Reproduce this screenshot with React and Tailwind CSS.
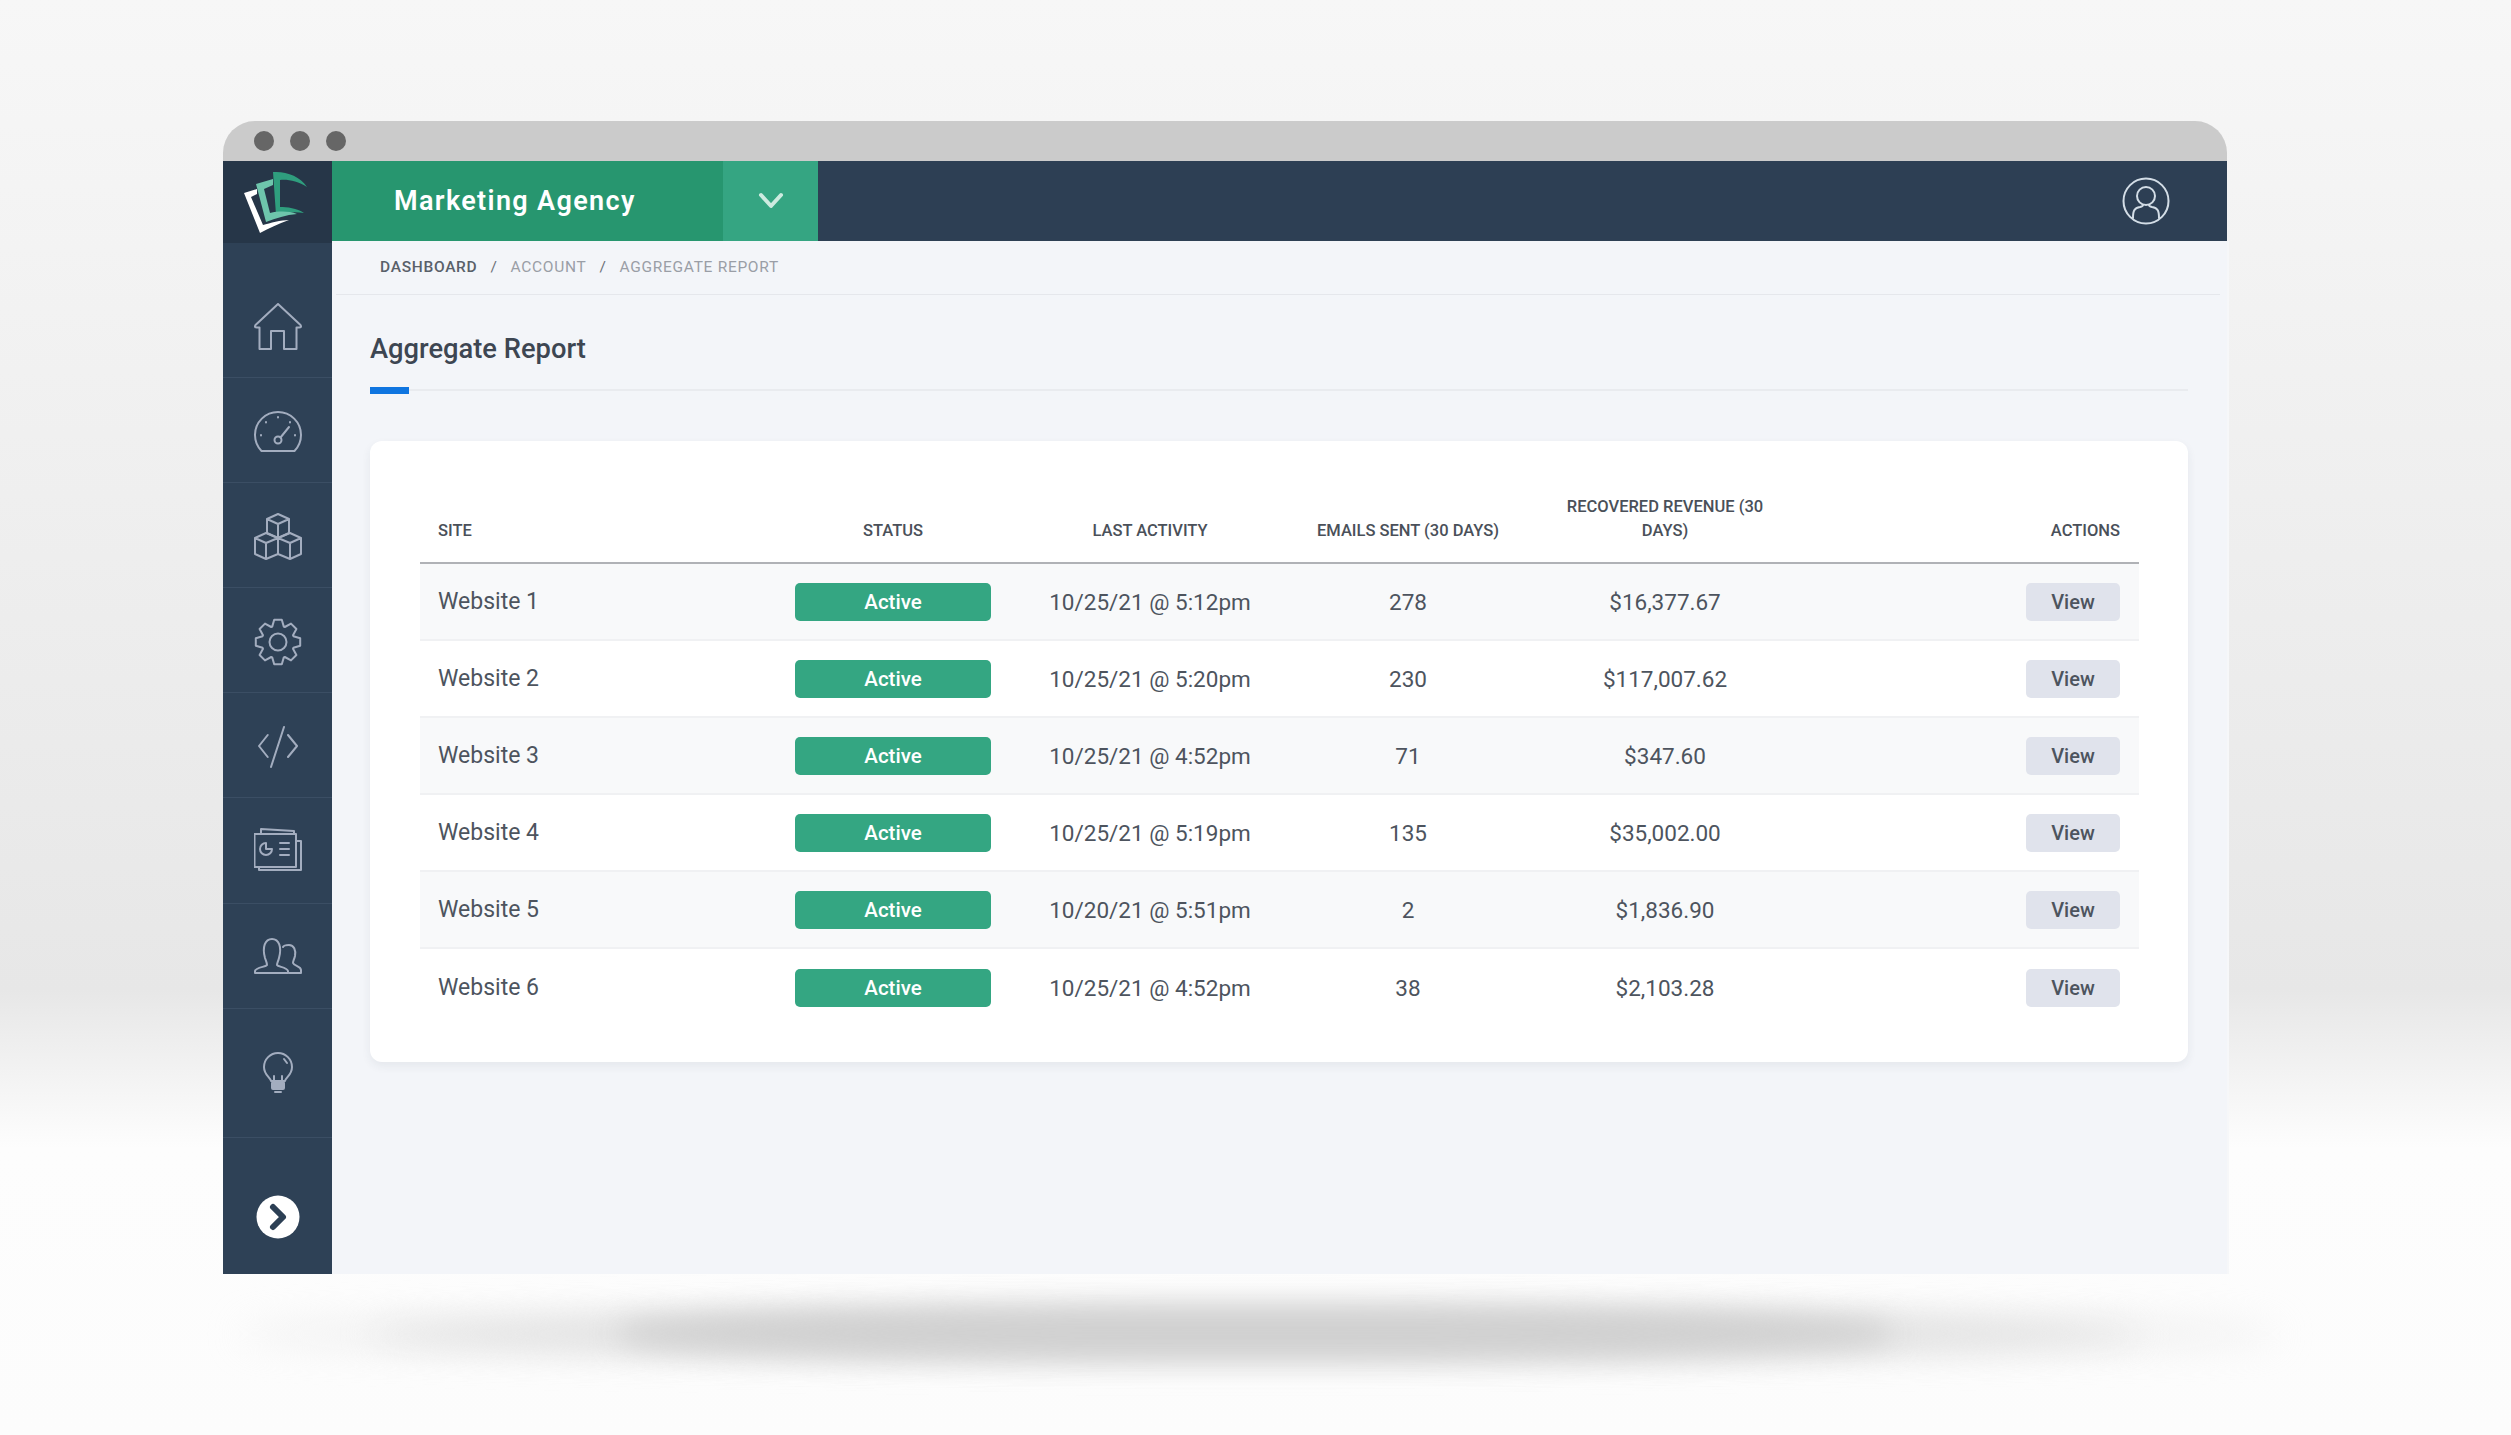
import React from "react";

const rows = [
  { site: "Website 1", activity: "10/25/21 @ 5:12pm", sent: "278", revenue: "$16,377.67" },
  { site: "Website 2", activity: "10/25/21 @ 5:20pm", sent: "230", revenue: "$117,007.62" },
  { site: "Website 3", activity: "10/25/21 @ 4:52pm", sent: "71", revenue: "$347.60" },
  { site: "Website 4", activity: "10/25/21 @ 5:19pm", sent: "135", revenue: "$35,002.00" },
  { site: "Website 5", activity: "10/20/21 @ 5:51pm", sent: "2", revenue: "$1,836.90" },
  { site: "Website 6", activity: "10/25/21 @ 4:52pm", sent: "38", revenue: "$2,103.28" },
];

const cols = "grid grid-cols-[357px_232px_282px_234px_280px_334px]";

function gearPath() {
  // 8 teeth, outer/inner radius picked to match the sidebar icon
  const pts = [];
  for (let i = 0; i < 8; i++) {
    const a = (i * Math.PI) / 4 - Math.PI / 2;
    const p = (r, off) => {
      const x = 24 + r * Math.cos(a + off);
      const y = 24 + r * Math.sin(a + off);
      return `${x.toFixed(1)} ${y.toFixed(1)}`;
    };
    pts.push(p(16.5, -0.36), p(22.5, -0.17), p(22.5, 0.17), p(16.5, 0.36));
  }
  return "M" + pts.join(" L") + " Z";
}

function Icon({ children }) {
  return (
    <svg width="48" height="48" viewBox="0 0 48 48" fill="none" stroke="#a3adbf" strokeWidth="2" strokeLinecap="round" strokeLinejoin="round">
      {children}
    </svg>
  );
}

function Logo() {
  return (
    <svg width="90" height="80" viewBox="0 0 90 80" className="-ml-[3px]">
      <path d="M42 10 C55 9 69 14 76 25 C67 19 56 17 49 18 L49 45 C56 45 66 46 73 51 C62 49 52 51 45 53 Z" fill="#2f9e7e" />
      <path d="M25 22 L42 17 L42 23 L33 27 L39 51 C48 49 58 49 66 52 C55 53 45 56 35 60 Z" fill="#6ec5ac" />
      <path d="M13 31 L26 27 L26 32 L20 35 L32 63 C39 61 50 58 58 58 C47 62 38 66 29 71 Z" fill="#ffffff" />
    </svg>
  );
}

function SideItem({ className, children }) {
  return <div className={`flex justify-center border-b border-[#3b4e64] ${className}`}>{children}</div>;
}

function App() {
  return (
    <div className="relative h-[1435px] w-full overflow-hidden bg-[linear-gradient(180deg,#f7f7f7_0%,#e7e7e7_69%,#fdfdfd_80%,#fcfcfc_100%)] pl-[223px] pt-[121px] font-['Roboto',sans-serif]">
      {/* floor shadow */}
      <div className="absolute left-[240px] top-[1316px] h-[36px] w-[2040px] rounded-[50%] bg-[#eaeaea] blur-[18px]" />
      <div className="absolute left-[370px] top-[1314px] h-[40px] w-[1770px] rounded-[50%] bg-[#e0e0e0] blur-[16px]" />
      <div className="absolute left-[620px] top-[1308px] h-[50px] w-[1270px] rounded-[40%] bg-[#d0d0d0] blur-[14px]" />

      <div className="relative flex h-[1153px] w-[2004px] flex-col">
        {/* title bar */}
        <div className="flex h-10 items-center gap-4 rounded-t-[32px] bg-[#cbcbcb] pl-[31px]">
          <span className="h-5 w-5 rounded-full bg-[#666666]" />
          <span className="h-5 w-5 rounded-full bg-[#666666]" />
          <span className="h-5 w-5 rounded-full bg-[#666666]" />
        </div>

        <div className="flex min-h-0 flex-1">
          {/* sidebar */}
          <aside className="flex w-[109px] flex-col bg-[#2e4156]">
            <div className="flex h-[82px] items-center justify-center bg-[#263648]">
              <Logo />
            </div>
            <SideItem className="h-[135px] pt-[60px]">
              <Icon>
                <path d="M24 1 L1.5 22 Q0 24.5 3 24.5 H5.5 V46 H17 V28 H30 V46 H42.5 V24.5 H45 Q48 24.5 46.5 22 Z" />
              </Icon>
            </SideItem>
            <SideItem className="h-[105px] pt-[30px]">
              <Icon>
                <path d="M7.5 43 A23 23 0 1 1 40.5 43 Z" />
                <circle cx="24" cy="32" r="3.5" />
                <path d="M26.5 29.5 L35 19" />
                <path d="M24 9 V9.5 M12 14 V14.5 M36 14 V14.5 M7 27 V27.5 M41 27 V27.5" />
              </Icon>
            </SideItem>
            <SideItem className="h-[105px] pt-[30px]">
              <Icon>
                <path d="M24 1 L35 6 V20 L24 25 L13 20 V6 Z M13 6 L24 11 L35 6 M24 11 V25" />
                <path d="M12 20 L24 25 V41 L12 46 L1 41 V25 Z M1 25 L12 30 L24 25 M12 30 V46" />
                <path d="M36 20 L47 25 V41 L36 46 L24 41 V25 Z M24 25 L36 30 L47 25 M36 30 V46" />
              </Icon>
            </SideItem>
            <SideItem className="h-[105px] pt-[30px]">
              <Icon>
                <path d={gearPath()} />
                <circle cx="24" cy="24" r="8.5" />
              </Icon>
            </SideItem>
            <SideItem className="h-[105px] pt-[29px]">
              <Icon>
                <path d="M13.7 13 L5 24 L13.7 35 M34 13 L43 24 L34 35 M30 5 L17 45" />
              </Icon>
            </SideItem>
            <SideItem className="h-[106px] pt-[28px]">
              <Icon>
                <rect x="0.5" y="8" width="41.5" height="33" />
                <path d="M7 8 V3 L40 5 V8 M42 15 H47 V44 L5 44 V41" />
                <path d="M12 17 A6 6 0 1 0 18 23 H12 Z" />
                <path d="M26 17 H35 M26 23 H35 M26 29 H35" />
              </Icon>
            </SideItem>
            <SideItem className="h-[105px] pt-[29px]">
              <Icon>
                <path d="M11 25 C8 14 11 6 18 6 C25 6 28 14 25 25 C24 29 23 30 23 32 C24 34 33 34 34 38 V40 H1 V38 C2 34 12 34 13 32 C13 30 12 28 11 25 Z" />
                <path d="M29 14 C30 12 33 12 35 12 C40 12 42 17 41 23 C40 27 39 28 39 30 C40 33 47 33 47 37 V40 H35" />
              </Icon>
            </SideItem>
            <SideItem className="h-[129px] pt-[40px]">
              <Icon>
                <path d="M17 32 C16 28 10 26 10 18 A14 14 0 1 1 38 18 C38 26 32 28 31 32 Z" />
                <path d="M20 32 L20 27 M28 32 L28 27 M30 10 L33 14" />
                <rect x="18" y="33" width="12" height="7" rx="1" fill="#a3adbf" />
                <path d="M21 43 H27" />
              </Icon>
            </SideItem>
            <div className="flex flex-1 justify-center pt-[57px]">
              <svg width="44" height="44" viewBox="0 0 44 44">
                <circle cx="22" cy="22" r="21.5" fill="#ffffff" />
                <path d="M17 12 L27 22 L17 32" fill="none" stroke="#2c3f54" strokeWidth="6" strokeLinecap="round" strokeLinejoin="round" />
              </svg>
            </div>
          </aside>

          {/* right side */}
          <div className="flex min-w-0 flex-1 flex-col">
            <header className="flex h-20 shrink-0 items-center bg-[#2d3f54]">
              <div className="flex h-full w-[391px] items-center bg-[#27966f] pl-[62px] text-[27px] font-semibold tracking-[1.35px] text-white">
                Marketing Agency
              </div>
              <div className="flex h-full w-[95px] items-center justify-center bg-[#35a582]">
                <svg width="28" height="20" viewBox="0 0 28 20" fill="none" stroke="#cdebe0" strokeWidth="4" strokeLinecap="round" strokeLinejoin="round">
                  <path d="M4 4 L14 15 L24 4" />
                </svg>
              </div>
              <div className="ml-auto mr-[57px] flex">
                <svg width="48" height="48" viewBox="0 0 48 48" fill="none" stroke="#d3dde6" strokeWidth="2" strokeLinecap="round">
                  <circle cx="24" cy="24" r="22.5" />
                  <circle cx="24" cy="19" r="9" />
                  <path d="M11 41 C11 34 12 31 18 30 C20 29.500 21 29 21 28 M37 41 C37 34 36 31 30 30 C28 29.500 27 29 27 28" />
                </svg>
              </div>
            </header>

            <div className="flex min-h-0 flex-1 flex-col bg-[#f3f5f9] shadow-[2px_0_0_#f6f7f9]">
              <div className="ml-1 mr-[7px] flex h-[54px] shrink-0 items-center gap-[13px] border-b border-[#e5e7ec] pl-[44px] text-[15.5px] tracking-[0.7px] text-[#9a9ea6]">
                <span className="font-medium text-[#596069]">DASHBOARD</span>
                <span className="text-[#6b7078]">/</span>
                <span>ACCOUNT</span>
                <span className="text-[#6b7078]">/</span>
                <span>AGGREGATE REPORT</span>
              </div>

              <main className="flex-1 pl-[38px] pr-[39px]">
                <div className="relative flex h-[96px] items-end border-b-2 border-[#e9ebef]">
                  <h1 className="mb-[24px] text-[27.3px] font-medium leading-8 text-[#3d4652]">Aggregate Report</h1>
                  <span className="absolute -bottom-[5px] left-0 h-[7px] w-[39px] bg-[#0f75e0]" />
                </div>

                <div className="mt-[50px] h-[621px] rounded-xl bg-white pb-[35px] pl-[50px] pr-[49px] pt-[54px] shadow-[0_4px_10px_rgba(40,50,70,0.07)]">
                  <div className={`${cols} h-[69px] items-end border-b-2 border-[#b0b2b6] pb-[19px] text-center text-[16.5px] font-medium leading-6 text-[#4a5059]`}>
                    <div className="pl-[18px] text-left">SITE</div>
                    <div>STATUS</div>
                    <div>LAST ACTIVITY</div>
                    <div>EMAILS SENT (30 DAYS)</div>
                    <div className="px-8">RECOVERED REVENUE (30 DAYS)</div>
                    <div className="pr-[19px] text-right">ACTIONS</div>
                  </div>
                  {rows.map((r, i) => (
                    <div
                      key={r.site}
                      className={`${cols} h-[77px] items-center text-center text-[22.5px] leading-7 text-[#4d545e] ${i % 2 === 0 ? "bg-[#f8f9fa]" : "bg-white"} ${i < 5 ? "border-b-2 border-[#f0f1f3]" : ""}`}
                    >
                      <div className="pl-[18px] text-left text-[23px]">{r.site}</div>
                      <div className="flex justify-center">
                        <span className="flex h-[38px] w-[196px] items-center justify-center rounded-[5px] bg-[#34a682] text-[20.5px] font-medium text-white">Active</span>
                      </div>
                      <div>{r.activity}</div>
                      <div>{r.sent}</div>
                      <div>{r.revenue}</div>
                      <div className="flex justify-end pr-[19px]">
                        <button className="flex h-[38px] w-[94px] items-center justify-center rounded-[5px] bg-[#e0e3ec] text-[20px] font-medium text-[#4d545e]">View</button>
                      </div>
                    </div>
                  ))}
                </div>
              </main>
            </div>
          </div>
        </div>
      </div>
    </div>
  );
}

export default App;
